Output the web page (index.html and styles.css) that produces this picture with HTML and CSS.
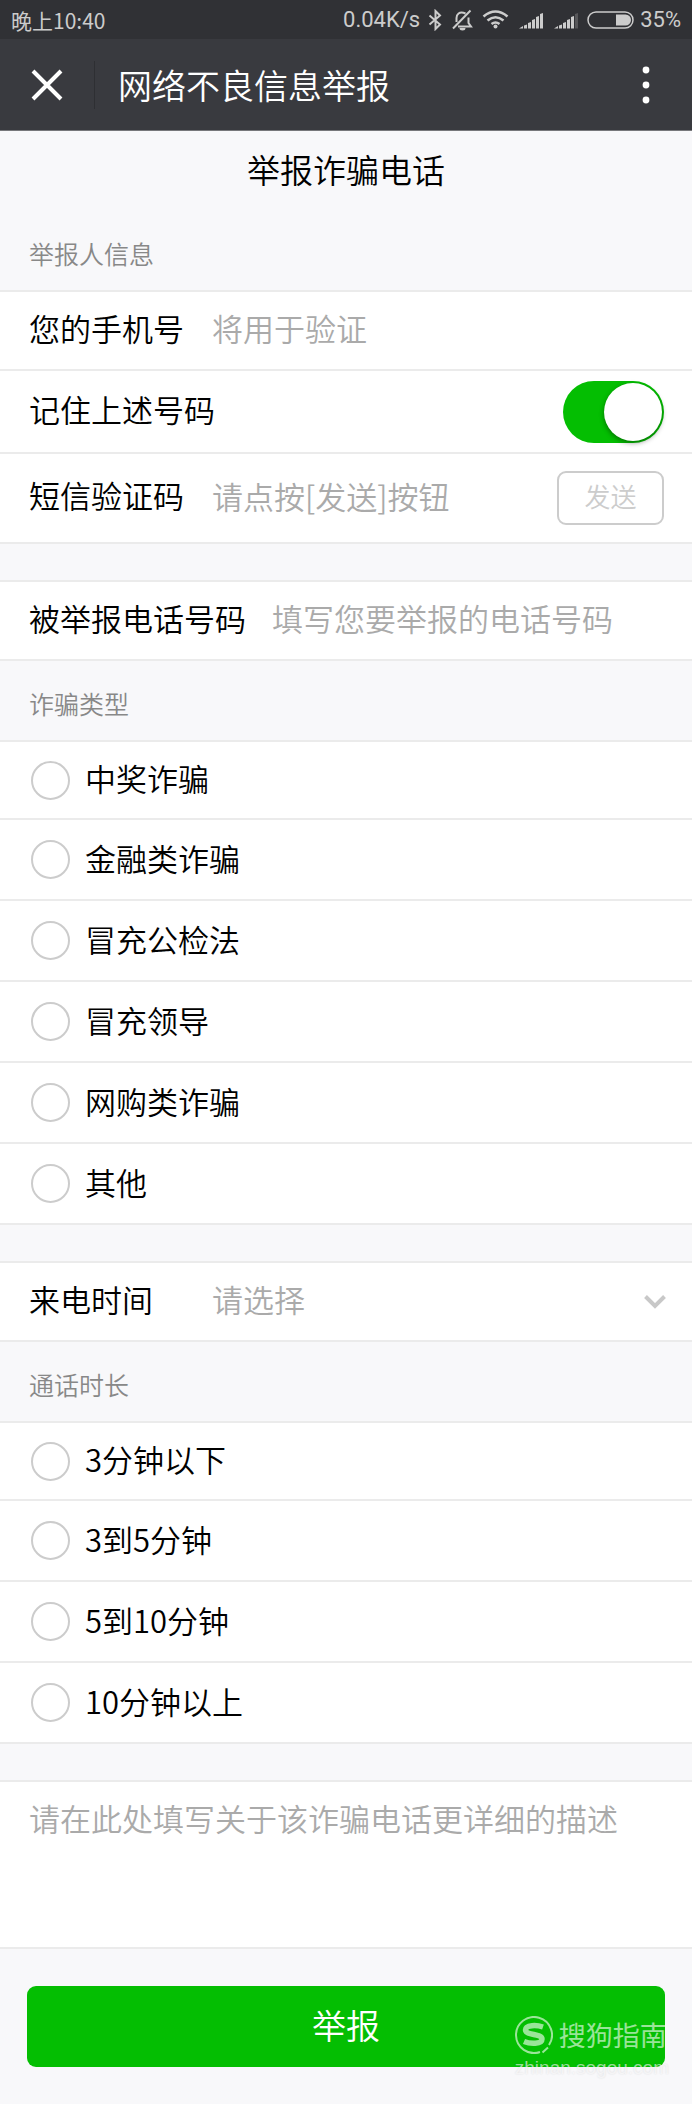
FILE: index.html
```html
<!DOCTYPE html>
<html lang="zh-CN">
<head>
<meta charset="utf-8">
<meta name="viewport" content="width=device-width, initial-scale=1">
<title>网络不良信息举报</title>
<link rel="stylesheet" href="styles.css">
</head>
<body>
<div class="status">
  <span class="status-time">晚上10:40</span>
  <div class="status-icons">
    <span>0.04K/s</span>
    <svg width="16" height="22" viewBox="0 0 16 22" fill="none" stroke="currentColor" stroke-width="2"><path d="M3.500 6.500L14 15.500L9.500 20V2L14 6.500L3.500 15.500"/></svg>
    <svg width="27" height="22" viewBox="0 0 27 22" fill="none" stroke="currentColor" stroke-width="2"><path d="M17.500 4.500C11 1.500 8.500 6 8.500 9V13M10 17.500H23L20.500 14V8.500M5 19.500L22.500 1.500"/><path d="M11.500 19a3 2.500 0 0 0 6 0z" fill="currentColor" stroke="none"/></svg>
    <svg width="29" height="22" viewBox="0 0 29 22" fill="none" stroke="currentColor" stroke-width="2.600"><path d="M2.500 7.500Q14.500 -2.500 26.500 7.500M6.500 11.500Q14.500 5 22.500 11.500M10.500 15Q14.500 12 18.500 15"/><circle cx="14.500" cy="17.500" r="2" fill="currentColor" stroke="none"/></svg>
    <svg width="29" height="22" viewBox="0 0 29 22" fill="currentColor"><path d="M3 19.500L7 17v2.500zM8 16.500l3-1v4H8zM12 14l3-1v6.500h-3zM16 11l3-1v9.500h-3zM20 8l3-1v12.500h-3zM24 5l3-1v15.500h-3z"/></svg>
    <svg width="29" height="22" viewBox="0 0 29 22" fill="currentColor"><path d="M3 19.500L7 17v2.500zM8 16.500l3-1v4H8zM12 14l3-1v6.500h-3zM16 11l3-1v9.500h-3zM20 8l3-1v12.500h-3z"/><path d="M24 5l3-1v15.500h-3z" opacity=".25"/></svg>
    <svg width="48" height="22" viewBox="0 0 48 22"><rect x="2" y="3" width="45" height="16" rx="8" fill="none" stroke="currentColor" stroke-width="1.500"/><path d="M30 5.500h9.500a5.500 5.500 0 0 1 0 11H30z" fill="currentColor"/></svg>
    <span>35%</span>
  </div>
</div>
<header class="bar">
  <button class="bar-close" type="button" aria-label="关闭"><svg width="32" height="32" viewBox="0 0 32 32" stroke="currentColor" stroke-width="4"><path d="M2 2L30 30M30 2L2 30"/></svg></button>
  <h1 class="bar-title">网络不良信息举报</h1>
  <button class="bar-more" type="button" aria-label="更多"><svg width="8" height="38" viewBox="0 0 8 38" fill="currentColor"><circle cx="4" cy="4" r="3.400"/><circle cx="4" cy="19" r="3.400"/><circle cx="4" cy="34" r="3.400"/></svg></button>
</header>
<main>
  <form>
    <h2 class="page-title">举报诈骗电话</h2>

    <h3 class="section">举报人信息</h3>
    <div class="group">
      <div class="row">
        <label class="label" for="phone">您的手机号</label>
        <input class="field" id="phone" type="tel" placeholder="将用于验证">
      </div>
      <div class="row row-switch">
        <label class="label" for="remember">记住上述号码</label>
        <input class="switch" id="remember" type="checkbox" checked>
      </div>
      <div class="row row-code">
        <label class="label" for="code">短信验证码</label>
        <input class="field" id="code" type="text" placeholder="请点按[发送]按钮">
        <button class="send" type="button">发送</button>
      </div>
    </div>

    <div class="group group-gap">
      <div class="row">
        <label class="label" for="target">被举报电话号码</label>
        <input class="field" id="target" type="tel" placeholder="填写您要举报的电话号码">
      </div>
    </div>

    <h3 class="section">诈骗类型</h3>
    <div class="group options">
      <label class="option"><input class="radio" type="radio" name="kind"><span class="option-text">中奖诈骗</span></label>
      <label class="option"><input class="radio" type="radio" name="kind"><span class="option-text">金融类诈骗</span></label>
      <label class="option"><input class="radio" type="radio" name="kind"><span class="option-text">冒充公检法</span></label>
      <label class="option"><input class="radio" type="radio" name="kind"><span class="option-text">冒充领导</span></label>
      <label class="option"><input class="radio" type="radio" name="kind"><span class="option-text">网购类诈骗</span></label>
      <label class="option"><input class="radio" type="radio" name="kind"><span class="option-text">其他</span></label>
    </div>

    <div class="group group-gap">
      <div class="row">
        <label class="label" for="time">来电时间</label>
        <select class="field" id="time"><option>请选择</option></select>
        <svg class="chevron" width="22" height="14" viewBox="0 0 22 14" fill="none" stroke="currentColor" stroke-width="4"><path d="M1.500 1.500L11 11L20.500 1.500"/></svg>
      </div>
    </div>

    <h3 class="section">通话时长</h3>
    <div class="group options">
      <label class="option"><input class="radio" type="radio" name="length"><span class="option-text">3分钟以下</span></label>
      <label class="option"><input class="radio" type="radio" name="length"><span class="option-text">3到5分钟</span></label>
      <label class="option"><input class="radio" type="radio" name="length"><span class="option-text">5到10分钟</span></label>
      <label class="option"><input class="radio" type="radio" name="length"><span class="option-text">10分钟以上</span></label>
    </div>

    <div class="group group-gap">
      <textarea class="detail" aria-label="详细描述" placeholder="请在此处填写关于该诈骗电话更详细的描述"></textarea>
    </div>

    <div class="actions">
      <button class="submit" type="submit">举报</button>
      <div class="mark">
        <svg width="38" height="38" viewBox="0 0 38 38" fill="none" stroke="currentColor"><path d="M25 36A18 18 0 1 1 34 29M27.500 36.500L33 31.500" stroke-width="2"/><path d="M28 11C22 9 10.500 8.500 10.500 14C10.500 19.500 27 17.500 27 23C27 28.500 15 28 9 25.500" stroke-width="5.500"/></svg>
        <span class="mark-name">搜狗指南</span>
        <span class="mark-url">zhinan.sogou.com</span>
      </div>
    </div>
  </form>
</main>
</body>
</html>
```
FILE: styles.css
```css
* { box-sizing: border-box; }

body {
  margin: 0;
  background: #f8f8fa;
  color: #000;
  font-family: "Noto Sans CJK SC", sans-serif;
  font-size: 31px;
  font-weight: 350;
  line-height: 44px;
}

h1, h2, h3 { margin: 0; font-weight: inherit; }

button, input, select, textarea {
  margin: 0;
  padding: 0;
  border: 0;
  background: none;
  color: inherit;
  font: inherit;
  appearance: none;
}

svg { display: block; flex: none; }

.status {
  display: flex;
  justify-content: space-between;
  align-items: center;
  height: 39px;
  padding: 0 11px;
  background: #303135;
  color: #ccc;
  font-weight: 400;
}

.status-time { font-size: 21px; }

.status-icons {
  display: flex;
  align-items: center;
  gap: 6px;
  font-family: Roboto, sans-serif;
  font-size: 22px;
}

.bar {
  display: flex;
  align-items: center;
  height: 92px;
  padding-right: 42px;
  border-bottom: 1px solid #77787b;
  background: #393a3f;
  color: #fff;
}

.bar-close {
  display: flex;
  align-items: center;
  height: 48px;
  padding: 0 31px;
  border-right: 1px solid #2e2f33;
}

.bar-title {
  flex: 1;
  padding-left: 23px;
  font-size: 34px;
}

.page-title {
  padding: 16px 0 20px;
  font-size: 33px;
  text-align: center;
}

.section {
  height: 79px;
  padding: 20px 29px 0;
  color: #888;
  font-size: 25px;
}

.group {
  border-top: 2px solid #ebebeb;
  border-bottom: 2px solid #ebebeb;
  background: #fff;
}

.group-gap { margin-top: 36px; }

.row {
  position: relative;
  display: flex;
  align-items: center;
  gap: 26px;
  min-height: 77px;
  padding: 0 28px 0 29px;
}

.row + .row, .option + .option { border-top: 2px solid #ebebeb; }

.row-switch { min-height: 83px; justify-content: space-between; }
.row-code { min-height: 90px; }

.label { min-width: 157px; padding-bottom: 6px; white-space: nowrap; }

.field { flex: 1; min-width: 0; height: 50px; padding-bottom: 6px; outline: 0; }
.field::placeholder, .detail::placeholder { color: #aaa; opacity: 1; }
select.field { color: #aaa; }

.switch {
  display: flex;
  justify-content: flex-end;
  width: 101px;
  height: 62px;
  padding: 2px;
  border-radius: 31px;
  background: #04be02;
}

.switch::before {
  content: "";
  width: 58px;
  height: 58px;
  border-radius: 50%;
  background: #fff;
  box-shadow: 0 2px 5px rgba(0, 0, 0, .4);
}

.send {
  width: 107px;
  height: 54px;
  padding-bottom: 4px;
  border: 2px solid #ccc;
  border-radius: 9px;
  color: #ccc;
  font-size: 26px;
}

.option {
  display: flex;
  align-items: center;
  gap: 15px;
  height: 81px;
  padding: 0 31px;
}

.option:first-child { height: 76px; }

.option-text { padding-bottom: 4px; }

.radio {
  width: 39px;
  height: 39px;
  border: 2px solid #ccc;
  border-radius: 50%;
}

.radio:checked { border: 12px solid #04be02; }

.chevron {
  position: absolute;
  right: 26px;
  color: #c8c8c8;
  pointer-events: none;
}

.detail {
  display: block;
  width: 100%;
  height: 165px;
  padding: 14px 29px;
  outline: 0;
  resize: none;
}

.actions {
  position: relative;
  padding: 37px 27px 32px;
}

.submit {
  display: block;
  width: 100%;
  height: 81px;
  padding-bottom: 4px;
  border-radius: 9px;
  background: #04be02;
  color: #fff;
  font-size: 34px;
}

.mark {
  position: absolute;
  top: 67px;
  right: 23px;
  display: grid;
  grid-template-columns: 38px auto;
  align-items: center;
  column-gap: 6px;
  color: rgba(255, 255, 255, .6);
  pointer-events: none;
}

.mark-name { font-size: 27px; font-weight: 400; line-height: 38px; }

.mark-url {
  grid-column: 1 / 3;
  font-family: "Liberation Sans", sans-serif;
  font-size: 19px;
  font-weight: 400;
  line-height: 28px;
  text-shadow: 0 0 2px rgba(0, 0, 0, .12);
}
```
